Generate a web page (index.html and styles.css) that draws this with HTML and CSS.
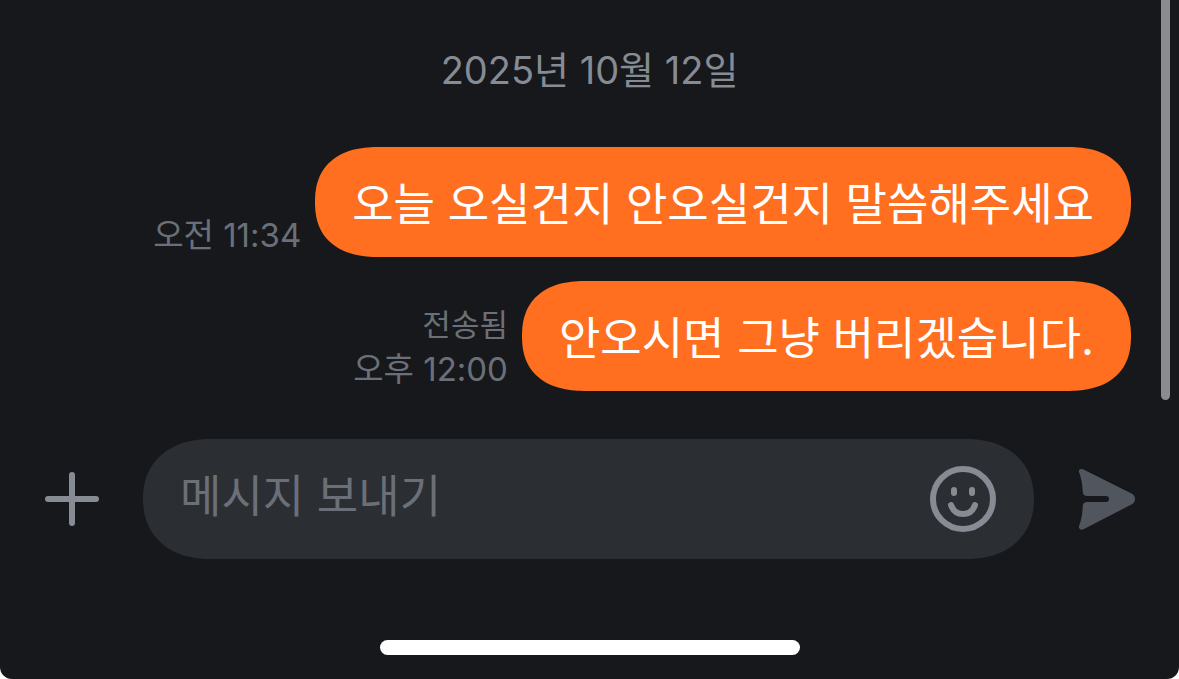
FILE: index.html
```html
<!DOCTYPE html>
<html lang="ko">
<head>
  <meta charset="UTF-8">
  <meta name="viewport" content="width=device-width, initial-scale=1, viewport-fit=cover">
  <title>채팅</title>
  <link rel="stylesheet" href="styles.css">
</head>
<body>
  <div class="app">
    <main class="messages">
      <h2 class="date">2025년 10월 12일</h2>
      <div class="message">
        <div class="meta">
          <time datetime="2025-10-12T11:34">오전 11:34</time>
        </div>
        <p class="bubble">오늘 오실건지 안오실건지 말씀해주세요</p>
      </div>
      <div class="message">
        <div class="meta">
          <span class="status">전송됨</span>
          <time datetime="2025-10-12T12:00">오후 12:00</time>
        </div>
        <p class="bubble">안오시면 그냥 버리겠습니다.</p>
      </div>
      <div class="scroll-indicator"></div>
    </main>

    <form class="composer">
      <button type="button" class="icon-button" aria-label="첨부">
        <svg width="54" height="54" viewBox="0 0 54 54" fill="none" stroke="#868b94" stroke-width="6" stroke-linecap="round">
          <path d="M27 3v48M3 27h48"/>
        </svg>
      </button>
      <div class="input-box">
        <input type="text" class="input" placeholder="메시지 보내기" aria-label="메시지 보내기">
        <button type="button" class="icon-button" aria-label="이모티콘">
          <svg width="66" height="66" viewBox="0 0 66 66" fill="none" stroke="#868b94" stroke-width="6" stroke-linecap="round">
            <circle cx="33" cy="33" r="30"/>
            <path d="M24 24v3M42 24v3"/>
            <path d="M21 39c2 6 6.500 9 12 9s10-3 12-9"/>
          </svg>
        </button>
      </div>
      <button type="submit" class="icon-button" aria-label="보내기">
        <svg width="58" height="62" viewBox="0 0 58 62" fill="#50555e">
          <path d="M5.500 1.400 54 25.800c4 2.100 4 8.300 0 10.400L5.500 61.200C3 62.500.200 60.800 1 58.200 3.400 51.500 4.500 46 4.700 38.500 4.800 35.500 6.500 34 9.200 34H28a3 3 0 0 0 0-6H9.200C6.500 28 4.800 26.500 4.700 23.500 4.500 16 3.400 10.500 1 4 .200 1.500 3 .100 5.500 1.400Z"/>
        </svg>
      </button>
    </form>

    <div class="home-bar"></div>
  </div>

  <script>
    document.querySelector('.composer').addEventListener('submit', e => e.preventDefault());
  </script>
</body>
</html>
```
FILE: styles.css
```css
* {
  box-sizing: border-box;
}
body {
  margin: 0;
  background: #FFFFFF;
  font-family: Inter, "Noto Sans CJK KR", sans-serif;
}
.app {
  display: flex;
  flex-direction: column;
  min-height: 100vh;
  background: #17181B;
  border-radius: 0 0 12px 12px;
}
.messages {
  position: relative;
  display: flex;
  flex-direction: column;
  gap: 24px;
  padding: 46px 48px 9px;
}
.date {
  margin: 0 0 29px;
  font-size: 38px;
  font-weight: 400;
  line-height: 48px;
  text-align: center;
  color: #868B94;
}
.message {
  display: flex;
  justify-content: flex-end;
  align-items: flex-end;
  gap: 14px;
}
.meta {
  display: flex;
  flex-direction: column;
  align-items: flex-end;
  font-size: 33px;
  line-height: 44px;
  color: #6B7078;
}
.status {
  font-size: 31px;
}
.bubble {
  margin: 0;
  padding: 28px 37px 22px;
  border-radius: 64px / 55px;
  corner-shape: superellipse(1.25);
  background: #FF6F1F;
  color: #FFFFFF;
  font-size: 45px;
  line-height: 60px;
}
.scroll-indicator {
  position: absolute;
  top: 0;
  right: 9px;
  bottom: 0;
  width: 9px;
  border-radius: 0 0 5px 5px;
  background: #8B8C8D;
}
.composer {
  display: flex;
  align-items: center;
  gap: 44px;
  padding: 39px 43px 0 45px;
}
.input-box {
  display: flex;
  flex: 1;
  align-items: center;
  height: 120px;
  padding: 0 38px 0 37px;
  border-radius: 68px / 60px;
  corner-shape: superellipse(1.15);
  background: #2B2E33;
}
.input {
  flex: 1;
  min-width: 0;
  height: 66px;
  padding: 0 0 6px;
  border: none;
  outline: none;
  background: none;
  font-family: inherit;
  font-size: 45px;
  color: #FFFFFF;
}
.input::placeholder {
  color: #6B7078;
  opacity: 1;
}
.icon-button {
  display: flex;
  padding: 0;
  border: none;
  background: none;
  cursor: pointer;
}
.home-bar {
  width: 420px;
  height: 15px;
  margin: auto auto 24px;
  border-radius: 8px;
  background: #FFFFFF;
}
```
